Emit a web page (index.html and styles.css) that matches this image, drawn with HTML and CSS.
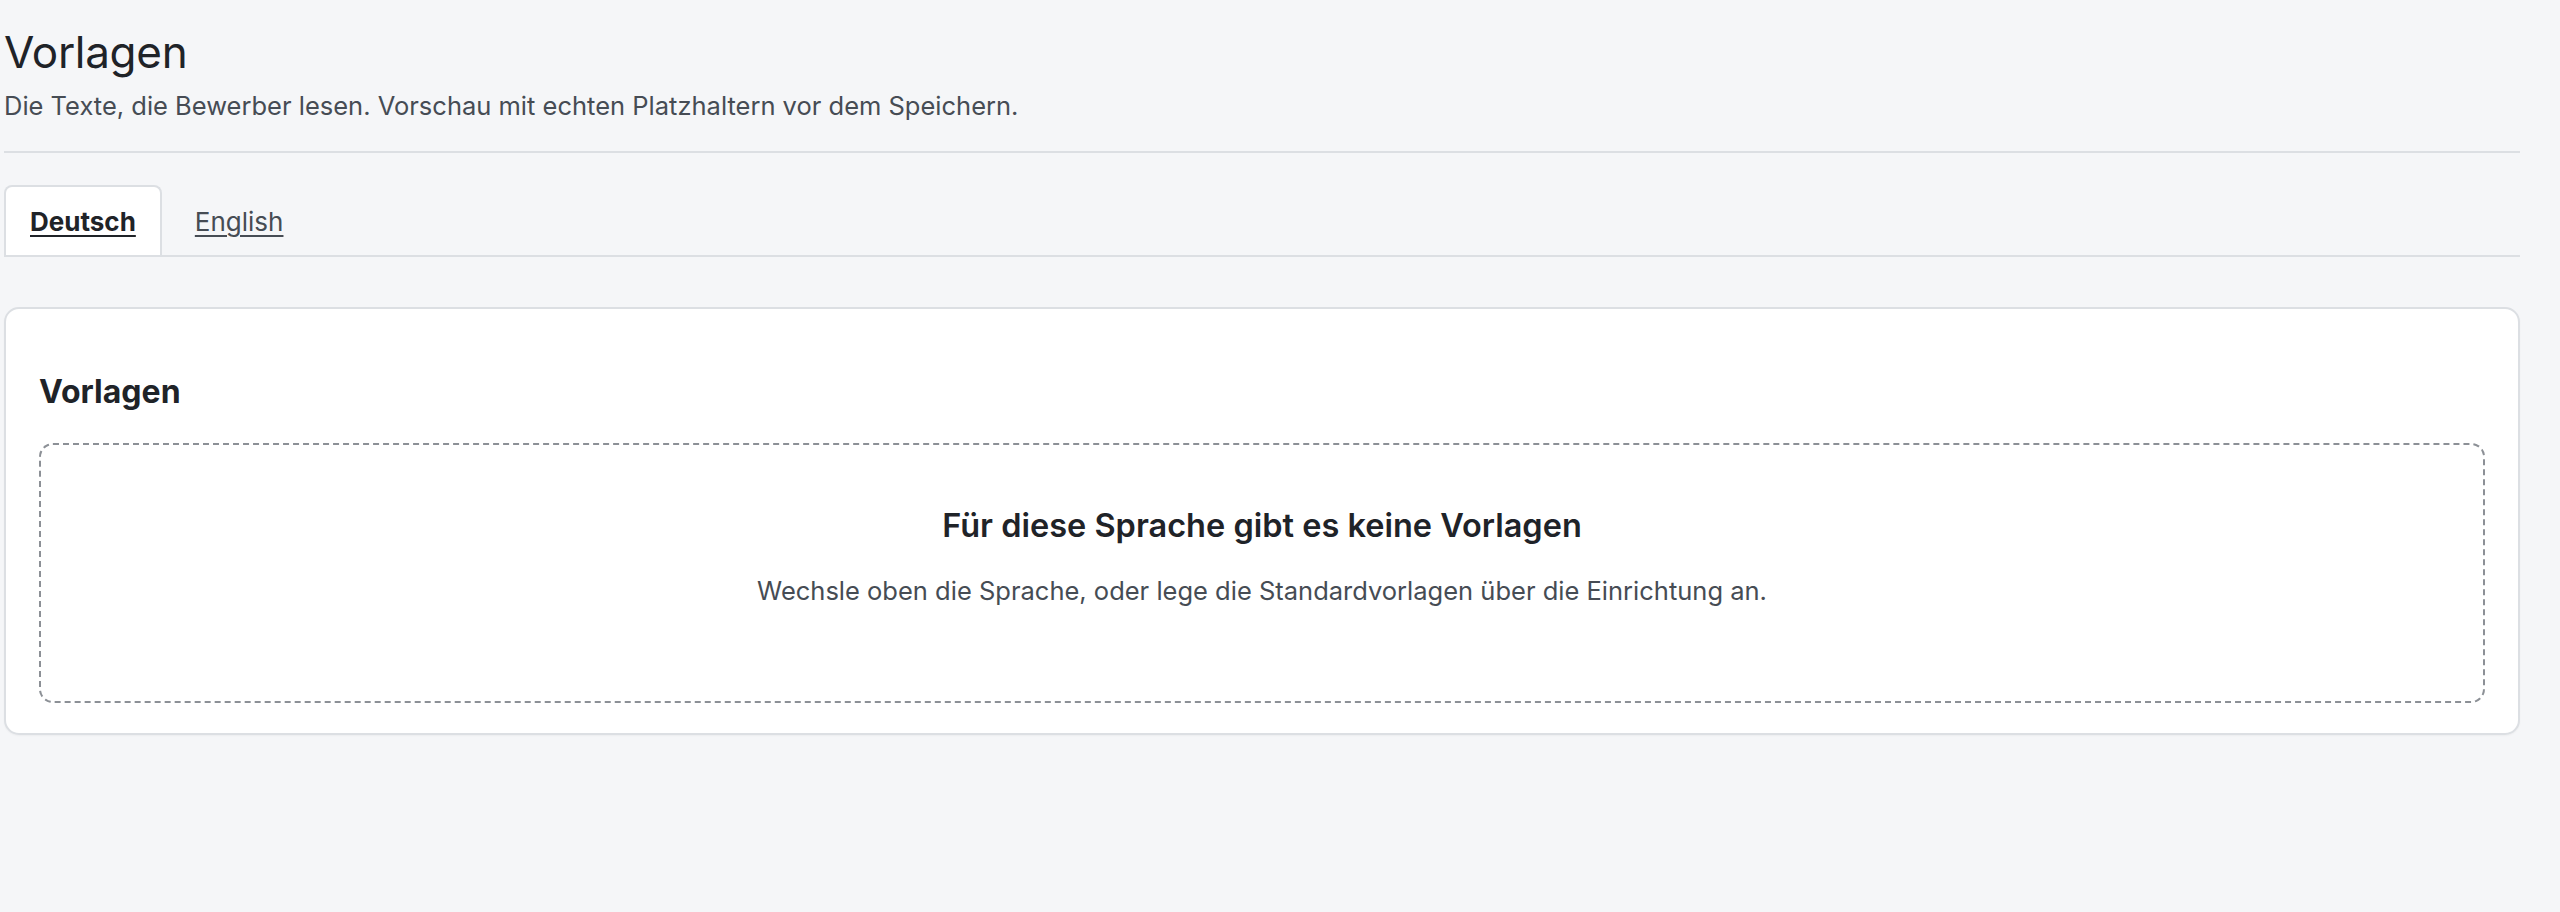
FILE: index.html
```html
<!DOCTYPE html>
<html lang="de">
<head>
<meta charset="utf-8">
<title>Vorlagen</title>
<link rel="stylesheet" href="styles.css">
</head>
<body>
<main class="page">
  <header class="page-head">
    <h1 class="page-title">Vorlagen</h1>
    <p class="page-sub">Die Texte, die Bewerber lesen. Vorschau mit echten Platzhaltern vor dem Speichern.</p>
  </header>
  <nav class="tabs">
    <a class="tab tab-active" href="#de">Deutsch</a>
    <a class="tab" href="#en">English</a>
  </nav>
  <section class="card">
    <h2 class="card-title">Vorlagen</h2>
    <div class="empty">
      <h3 class="empty-title">Für diese Sprache gibt es keine Vorlagen</h3>
      <p class="empty-text">Wechsle oben die Sprache, oder lege die Standardvorlagen über die Einrichtung an.</p>
    </div>
  </section>
</main>
</body>
</html>
```

FILE: styles.css
```css
* { box-sizing: border-box; }
html, body { margin: 0; padding: 0; }
body {
  background: #f5f6f8;
  color: #212529;
  font-family: Inter, "Noto Sans", "Liberation Sans", sans-serif;
  font-size: 25.5px;
  line-height: 36px;
}
.page {
  padding: 26px 40px 40px 4px;
}
.page-head {
  padding-bottom: 27px;
  border-bottom: 2px solid #dcdfe3;
}
.page-title {
  margin: 0 0 9px 0;
  font-size: 44px;
  line-height: 53px;
  font-weight: 400;
  letter-spacing: -0.3px;
  color: #1f2328;
}
.page-sub {
  margin: 0;
  font-size: 25.5px;
  line-height: 36px;
  color: #464c54;
}
.tabs {
  display: flex;
  gap: 7px;
  margin-top: 32px;
  border-bottom: 2px solid #dcdfe3;
}
.tab {
  padding: 17px 24px 15px;
  border: 2px solid transparent;
  border-bottom: 0;
  border-radius: 8px 8px 0 0;
  color: #464c54;
  text-decoration: underline;
  text-decoration-thickness: 2px;
  text-underline-offset: 4px;
  font-size: 26px;
  line-height: 36px;
}
.tab-active {
  background: #ffffff;
  border-color: #dcdfe3;
  color: #1f2328;
  font-weight: 700;
}
.card {
  margin-top: 50px;
  background: #ffffff;
  border: 2px solid #dcdfe3;
  border-radius: 15px;
  padding: 33px 33px 30px;
  box-shadow: 0 1px 2px rgba(0, 0, 0, 0.04);
}
.card-title {
  margin: 31px 0 32px 0;
  font-size: 32px;
  line-height: 38px;
  font-weight: 700;
  color: #1f2328;
}
.empty {
  border: 2px dashed #8c9096;
  border-radius: 14px;
  padding: 62px 24px 91px;
  text-align: center;
}
.empty-title {
  margin: 0 0 27px 0;
  font-size: 32.5px;
  line-height: 38px;
  font-weight: 600;
  color: #1f2328;
}
.empty-text {
  margin: 0;
  font-size: 25.5px;
  line-height: 38px;
  color: #464c54;
}
```
